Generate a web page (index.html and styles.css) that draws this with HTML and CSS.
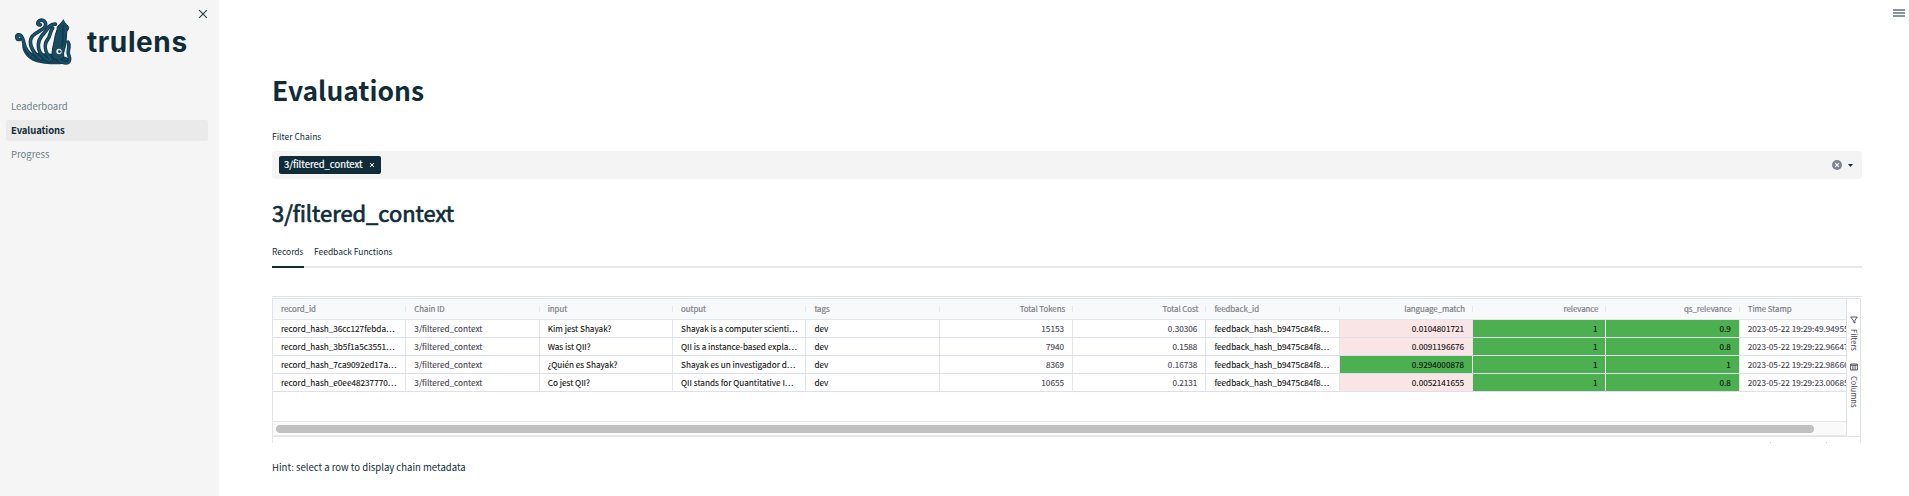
FILE: index.html
```html
<!DOCTYPE html>
<html lang="en">
<head>
<meta charset="utf-8">
<title>Evaluations</title>
<link rel="stylesheet" href="styles.css">
</head>
<body>
<div class="app">
  <aside class="sidebar">
    <svg class="close" viewBox="0 0 10 10"><path d="M1.2 1.2 8.8 8.8M8.8 1.2 1.2 8.8"/></svg>
    <div class="brand">
      <svg class="squid" viewBox="42 54 174 140">
        <path class="base" d="M67 128C76 134 82 150 96 158C106 158 130 160 150 160L196 170C210 176 214 184 206 190C180 194 130 194 104 184C84 176 70 160 67 142Z"/>
        <g class="arm-edge">
          <path d="M59 118C50 119 47 107 55 104C66 102 69 116 71 126C74 144 84 160 102 174"/>
          <path d="M121 74C114 77 110 68 118 62C129 56 140 66 136 77C131 90 110 93 97 108C84 126 94 154 122 176"/>
          <path d="M166 72C148 72 143 86 133 98C118 112 112 126 116 146C120 164 134 174 148 182"/>
          <path d="M158 84C150 92 152 106 143 118C130 134 136 158 154 180"/>
          <path d="M204 126C212 140 202 150 205 160C207 170 214 180 204 187C194 190 182 186 176 178"/>
        </g>
        <path class="body" d="M190 60C194 70 205 76 206 82C206 90 199 92 200 98L198 126C198 144 188 154 191 170C186 184 166 182 158 172C152 160 162 130 166 104L172 86C168 80 180 74 190 60Z"/>
        <g class="arm">
          <path d="M59 118C50 119 47 107 55 104C66 102 69 116 71 126C74 144 84 160 102 174"/>
          <path d="M121 74C114 77 110 68 118 62C129 56 140 66 136 77C131 90 110 93 97 108C84 126 94 154 122 176"/>
          <path d="M166 72C148 72 143 86 133 98C118 112 112 126 116 146C120 164 134 174 148 182"/>
          <path d="M158 84C150 92 152 106 143 118C130 134 136 158 154 180"/>
          <path d="M204 126C212 140 202 150 205 160C207 170 214 180 204 187C194 190 182 186 176 178"/>
        </g>
        <path class="shade" d="M190 76C186 104 192 122 186 138"/>
        <circle class="eye" cx="177" cy="154" r="8"/>
        <circle class="pupil" cx="178" cy="154" r="4"/>
      </svg>
      <span class="wordmark">trulens</span>
    </div>
    <nav class="nav">
      <a class="nav-item">Leaderboard</a>
      <a class="nav-item active">Evaluations</a>
      <a class="nav-item">Progress</a>
    </nav>
  </aside>
  <main class="main">
    <svg class="menu" viewBox="0 0 12 8"><path d="M0 1H12M0 4H12M0 7H12"/></svg>
    <h1 class="title">Evaluations</h1>
    <div class="label">Filter Chains</div>
    <div class="select">
      <span class="tag"><span class="tag-text">3/filtered_context</span><svg class="tag-x" viewBox="0 0 6 6"><path d="M1 1 5 5M5 1 1 5"/></svg></span>
      <svg class="clear" viewBox="0 0 10 10"><circle cx="5" cy="5" r="5"/><path d="M3.2 3.2 6.8 6.8M6.8 3.2 3.2 6.8"/></svg>
      <svg class="caret" viewBox="0 0 5 3"><path d="M0 0H5L2.5 3Z"/></svg>
    </div>
    <h2 class="subtitle">3/filtered_context</h2>
    <div class="tabs"><span class="tab selected">Records</span><span class="tab feedback">Feedback Functions</span></div>
    <div class="frame">
      <div class="table">
        <div class="viewport">
          <div class="row head">
            <div class="cell">record_id</div><div class="cell">Chain ID</div><div class="cell">input</div><div class="cell">output</div><div class="cell">tags</div><div class="cell num">Total Tokens</div><div class="cell num">Total Cost</div><div class="cell">feedback_id</div><div class="cell num">language_match</div><div class="cell num">relevance</div><div class="cell num">qs_relevance</div><div class="cell">Time Stamp</div>
          </div>
          <div class="row">
            <div class="cell dark">record_hash_36cc127febda…</div><div class="cell">3/filtered_context</div><div class="cell dark">Kim jest Shayak?</div><div class="cell dark">Shayak is a computer scienti…</div><div class="cell dark">dev</div><div class="cell num">15153</div><div class="cell num">0.30306</div><div class="cell dark">feedback_hash_b9475c84f8…</div><div class="cell num dark low">0.0104801721</div><div class="cell num dark high">1</div><div class="cell num dark high">0.9</div><div class="cell">2023-05-22 19:29:49.94955</div>
          </div>
          <div class="row">
            <div class="cell dark">record_hash_3b5f1a5c3551…</div><div class="cell">3/filtered_context</div><div class="cell dark">Was ist QII?</div><div class="cell dark">QII is a instance-based expla…</div><div class="cell dark">dev</div><div class="cell num">7940</div><div class="cell num">0.1588</div><div class="cell dark">feedback_hash_b9475c84f8…</div><div class="cell num dark low">0.0091196676</div><div class="cell num dark high">1</div><div class="cell num dark high">0.8</div><div class="cell">2023-05-22 19:29:22.96647</div>
          </div>
          <div class="row">
            <div class="cell dark">record_hash_7ca9092ed17a…</div><div class="cell">3/filtered_context</div><div class="cell dark">¿Quién es Shayak?</div><div class="cell dark">Shayak es un investigador d…</div><div class="cell dark">dev</div><div class="cell num">8369</div><div class="cell num">0.16738</div><div class="cell dark">feedback_hash_b9475c84f8…</div><div class="cell num dark high">0.9294000878</div><div class="cell num dark high">1</div><div class="cell num dark high">1</div><div class="cell">2023-05-22 19:29:22.98666</div>
          </div>
          <div class="row">
            <div class="cell dark">record_hash_e0ee48237770…</div><div class="cell">3/filtered_context</div><div class="cell dark">Co jest QII?</div><div class="cell dark">QII stands for Quantitative I…</div><div class="cell dark">dev</div><div class="cell num">10655</div><div class="cell num">0.2131</div><div class="cell dark">feedback_hash_b9475c84f8…</div><div class="cell num dark low">0.0052141655</div><div class="cell num dark high">1</div><div class="cell num dark high">0.8</div><div class="cell">2023-05-22 19:29:23.00685</div>
          </div>
          <div class="scroll"><div class="thumb"></div></div>
        </div>
        <div class="tools">
          <svg class="funnel" viewBox="0 0 8 8"><path d="M.7 1H7.3L4.9 4.3V7L3.3 5.9V4.3Z"/></svg>
          <span class="tool">Filters</span>
          <svg class="cols" viewBox="0 0 8 8"><path d="M.6 1H7.4V7H.6ZM.6 2.2H7.4M2.9 2V7M5.1 2V7"/></svg>
          <span class="tool">Columns</span>
        </div>
      </div>
      <div class="pager"><i></i><i></i></div>
    </div>
    <p class="hint">Hint: select a row to display chain metadata</p>
  </main>
</div>
</body>
</html>
```
FILE: styles.css
```css
* { box-sizing: border-box; }
body {
  margin: 0;
  background: #fff;
  color: #0f2c38;
  font-family: "Noto Sans CJK SC", "Noto Sans", sans-serif;
}
svg { display: block; fill: none; flex: none; }
.app { display: flex; height: 496px; overflow: hidden; }

.sidebar { position: relative; width: 219px; background: #f5f5f5; }
.close { position: absolute; left: 198px; top: 9px; width: 10px; height: 10px; stroke: #26404a; stroke-width: 1.2; }
.brand { display: flex; height: 94px; padding: 18px 0 0 14px; }
.squid { width: 58px; height: 47px; stroke-linecap: round; stroke-linejoin: round; }
.base { fill: #154459; }
.arm-edge { stroke: #11394c; stroke-width: 11; }
.arm { stroke: #1a526a; stroke-width: 6; }
.body { fill: #174c63; stroke: #0d2c3c; stroke-width: 3; }
.shade { stroke: #103b4f; stroke-width: 5; }
.eye { fill: #f0eee4; }
.pupil { fill: #102733; }
.wordmark { margin-left: 15px; padding-top: 1px; font: 700 28px/46px Inter, sans-serif; letter-spacing: .6px; }
.nav { display: flex; flex-direction: column; gap: 3px; padding: 2px 11px 0 6px; }
.nav-item { height: 21px; padding-left: 5px; border-radius: 2px; font-size: 9.5px; line-height: 20px; color: #6f8086; }
.active { background: #eaeaea; color: #0f2c38; font-weight: 700; letter-spacing: -.1px; }

.main { position: relative; flex: 1; padding: 71px 47px 0 53px; }
.menu { position: absolute; right: 4px; top: 9px; width: 12px; height: 8px; stroke: #0f2c38; stroke-width: 1.1; }
.title { margin: 0; height: 56px; font-size: 26.4px; line-height: 38px; font-weight: 700; }
.label { height: 24px; font-size: 8.5px; line-height: 18px; }
.select { display: flex; align-items: center; height: 28px; padding: 0 10px 0 7px; border-radius: 3px; background: #f4f4f4; }
.tag { display: flex; align-items: center; justify-content: space-between; width: 102px; height: 18px; padding: 0 6px 0 5px; border-radius: 2px; background: #0f2c38; color: #fff; font-size: 9.45px; line-height: 15px; }
.tag-text { margin-top: -2px; -webkit-text-stroke: .2px #fff; }
.tag-x { width: 6px; height: 6px; stroke: #fff; stroke-width: 1; }
.clear { width: 10px; height: 10px; margin-left: auto; }
.clear circle { fill: #808495; }
.clear path { stroke: #fff; stroke-width: 1.1; }
.caret { width: 5px; height: 3px; margin: 0 -1px 0 6px; fill: #0f2c38; }
.subtitle { margin: 16px 0 0; height: 48px; font-size: 21.9px; line-height: 36px; font-weight: 400; -webkit-text-stroke: .7px #0f2c38; }
.tabs { display: flex; gap: 10px; height: 25px; border-bottom: 2px solid #e4e8eb; font-size: 8.45px; line-height: 17px; }
.tab { height: 25px; }
.selected { width: 32px; border-bottom: 2px solid #0f2c38; }

.frame { height: 147px; margin-top: 28px; border-top: 1px solid #dfe3ec; padding-top: 1px; }
.table { display: flex; width: 1589px; height: 139px; border: 1px solid #e0e3e7; border-bottom: 1px solid #e2e5e8; }
.viewport { display: flex; flex-direction: column; width: 1573px; overflow: hidden; }
.row { display: grid; grid-template-columns: repeat(12, 133.35px); width: 1573px; height: 18px; border-bottom: 1px solid #dde0ec; font-size: 8.2px; line-height: 17px; color: #45434f; -webkit-text-stroke: .1px; }
.cell { height: 17px; padding: 0 8px; white-space: nowrap; border-right: 1px solid #e3e5e8; overflow: hidden; }
.num { text-align: right; }
.dark { color: #111; }
.low { background: #f9e5e5; }
.high { background: #4caf50; }
.head { height: 21px; background: #f8f9fb; border-color: #e3e5e8; font-size: 7.9px; line-height: 20px; color: #7d7e87; -webkit-text-stroke: .2px #7d7e87; letter-spacing: -.05px; }
.head .cell { height: 20px; border-right: 0; background: linear-gradient(#e6e8eb, #e6e8eb) right 7px / 1px 6px no-repeat; }
.scroll { height: 15px; margin-top: auto; padding: 3px 0 0 3px; border-top: 1px solid #e4e5e7; border-bottom: 1px solid #e8e8e8; background: #fafafa; }
.thumb { width: 1538px; height: 8px; border-radius: 4px; background: #c1c1c1; }
.tools { display: flex; flex-direction: column; align-items: center; width: 14px; padding-top: 17px; border-left: 1px solid #e0e3e7; }
.funnel, .cols { width: 8px; height: 8px; stroke: #44434f; stroke-width: .9; }
.tool { writing-mode: vertical-rl; font-size: 7.6px; line-height: 12px; color: #45434f; margin: 5px 0 12px; }
.pager { display: flex; justify-content: flex-end; align-items: flex-end; gap: 55px; width: 1589px; height: 6px; padding-right: 33px; border: 1px solid #e4e6e9; border-width: 0 1px; }
.pager i { width: 1px; height: 1px; background: #ccc; }
.hint { margin: 14px 0 0; font-size: 9.55px; line-height: 20px; }
```
